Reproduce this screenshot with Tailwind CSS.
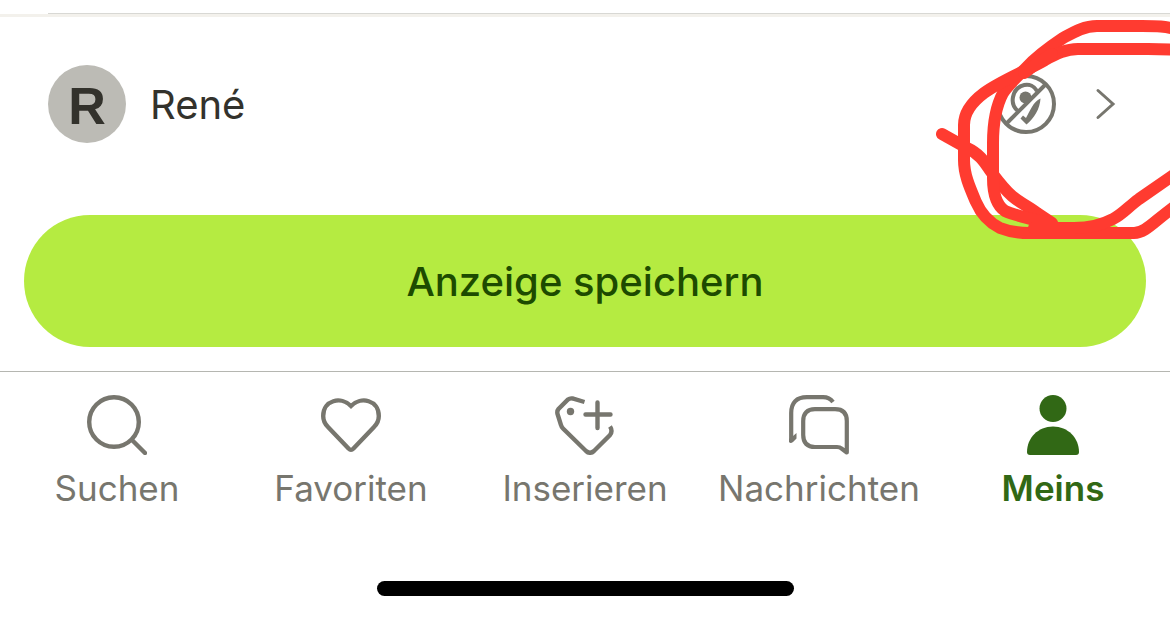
<!DOCTYPE html>
<html lang="de">
<head>
<meta charset="utf-8">
<meta name="viewport" content="width=device-width, initial-scale=1">
<title>Anzeige speichern</title>
<script src="https://cdn.jsdelivr.net/npm/@tailwindcss/browser@4"></script>
</head>
<body class="relative min-h-screen overflow-x-hidden bg-white font-['Inter',sans-serif] text-[#33322c]">
<main>
  <div class="pt-[13px]">
    <div class="ml-12 h-px bg-[#d8d8d4]"></div>
    <div class="h-[3px] bg-[#f3f1ec]"></div>
  </div>

  <a href="#profil" class="flex items-center pt-12 pr-12 pl-12">
    <span class="flex size-[78px] items-center justify-center rounded-full bg-[#bcbbb5] pt-1 font-['Liberation_Sans',sans-serif] text-[52px] leading-none font-bold">R</span>
    <span class="ml-6 flex-1 pt-[2px] text-[40px] leading-none">René</span>
    <svg class="mr-[18px] size-[60px]" viewBox="0 0 60 60" fill="none" stroke="#77766e" stroke-width="4" aria-hidden="true">
      <circle cx="30" cy="30" r="28"/>
      <path d="M10 50 50 10"/>
      <path d="M22 37C17 33 16 28 17 23C20 9 36 7 41 17"/>
      <circle cx="29.500" cy="23.500" r="6" fill="#77766e" stroke="none"/>
      <path d="M44.500 24.500C44 35 38 44 30.500 50.500L24.500 44.500L27 41.500L30 44C34 37 37 28 44.500 24.500Z" fill="#77766e" stroke="none"/>
    </svg>
    <svg class="h-[60px] w-12" viewBox="0 0 48 60" fill="none" stroke="#77766e" stroke-width="3" stroke-linecap="round" aria-hidden="true">
      <path d="m24 16.500 15 13.500-15 13.500"/>
    </svg>
  </a>

  <div class="px-6 pt-[72px] pb-6">
    <button type="button" class="h-[132px] w-full rounded-full bg-[#b5eb41] pt-[2px] text-[40px] leading-none font-medium text-[#1d4b00]">Anzeige speichern</button>
  </div>
</main>

<nav class="grid grid-cols-5 border-t border-[#b5b6b1] pt-[23px] text-[35px] leading-[40px] text-[#77766e]">
  <a href="#suchen" class="flex flex-col items-center gap-[13px]">
    <svg class="size-[60px]" viewBox="0 0 60 60" fill="none" stroke="currentColor" stroke-width="4.400" stroke-linecap="round" aria-hidden="true"><circle cx="27" cy="27" r="24.800"/><path d="m45 45 13 13"/></svg>
    Suchen
  </a>
  <a href="#favoriten" class="flex flex-col items-center gap-[13px]">
    <svg class="size-[60px]" viewBox="0 0 60 60" fill="none" stroke="currentColor" stroke-width="4.400" aria-hidden="true"><path d="M30 11C20 1 2.200 5 2.200 21C2.200 26 4 29 7 32L27.500 53.500Q30 56 32.500 53.500L53 32C56 29 57.800 26 57.800 21C57.800 5 40 1 30 11Z"/></svg>
    Favoriten
  </a>
  <a href="#inserieren" class="flex flex-col items-center gap-[13px]">
    <svg class="size-[60px]" viewBox="0 0 60 60" fill="none" stroke="currentColor" stroke-width="4.400" aria-hidden="true"><path d="M29.500 7 17.500 3.500Q15 3 13 4.500L3.500 14Q1.800 16 2.500 19L6 30Q6.500 32 8 33.500L31 56Q35 59.500 39 56L55 40Q58 36 55 31.500"/><circle cx="15.500" cy="16.500" r="3.700" fill="currentColor" stroke="none"/><path d="M42.500 7.500V33M30.500 19.500H55.500" stroke-linecap="round"/></svg>
    Inserieren
  </a>
  <a href="#nachrichten" class="flex flex-col items-center gap-[13px]">
    <svg class="size-[60px]" viewBox="0 0 60 60" fill="none" stroke="currentColor" stroke-width="4.200" aria-hidden="true"><path d="M44 7Q40.500 2.200 34 2.200H18Q2.200 2.200 2.200 18V45" /><path d="M0 44V47Q1.500 49 4 47L7.500 43.500V38L4 41Z" fill="currentColor" stroke="none"/><path d="M26 14.200H46Q57.800 14.200 57.800 26V57.500L52.500 53.500Q51 52 48 52H26Q14.200 52 14.200 40V26Q14.200 14.200 26 14.200Z" stroke-linejoin="round"/></svg>
    Nachrichten
  </a>
  <a href="#meins" aria-current="page" class="flex flex-col items-center gap-[13px] font-semibold text-[#316815]">
    <svg class="size-[60px]" viewBox="0 0 60 60" fill="currentColor" aria-hidden="true"><circle cx="30" cy="13.500" r="13.500"/><path d="M4 57C4 43 15 31.500 30 31.500S56 43 56 57Q56 60 53 60H7Q4 60 4 57Z"/></svg>
    Meins
  </a>
</nav>

<div class="mx-auto mt-[73px] h-[15px] w-[417px] rounded-full bg-black"></div>

<svg class="pointer-events-none absolute top-0 right-0 h-[250px] w-[250px]" viewBox="0 0 250 250" fill="none" stroke="#ff3b30" stroke-width="12" stroke-linecap="round" stroke-linejoin="round" aria-hidden="true">
  <path d="M22 134 47 148C62 155 66 165 72 173C78 181 84 189 92 196C100 203 108 206 117 213L132 223"/>
  <path d="M258 30C246 26 236 26 222 26H177C164 26 154 32 143 38C128 48 114 59 106 68C98 76 88 85 83 93C75 108 73 124 73 143V178C73 194 76 205 85 211C96 216 112 219 132 224"/>
  <path d="M258 50C246 49 240 49 228 49H158C146 49 136 54 125 60C110 69 80 81 64 93C52 102 44 112 44 125V160C44 175 50 188 56 202C62 216 70 223 80 228C90 232 98 233 110 233H214C226 233 234 221 258 204"/>
  <path d="M258 172 219 199C208 207 203 214 193 219C180 226 168 228 154 228H114"/>
  <path d="M104 73C112 67 122 59 132 54"/>
</svg>
</body>
</html>
